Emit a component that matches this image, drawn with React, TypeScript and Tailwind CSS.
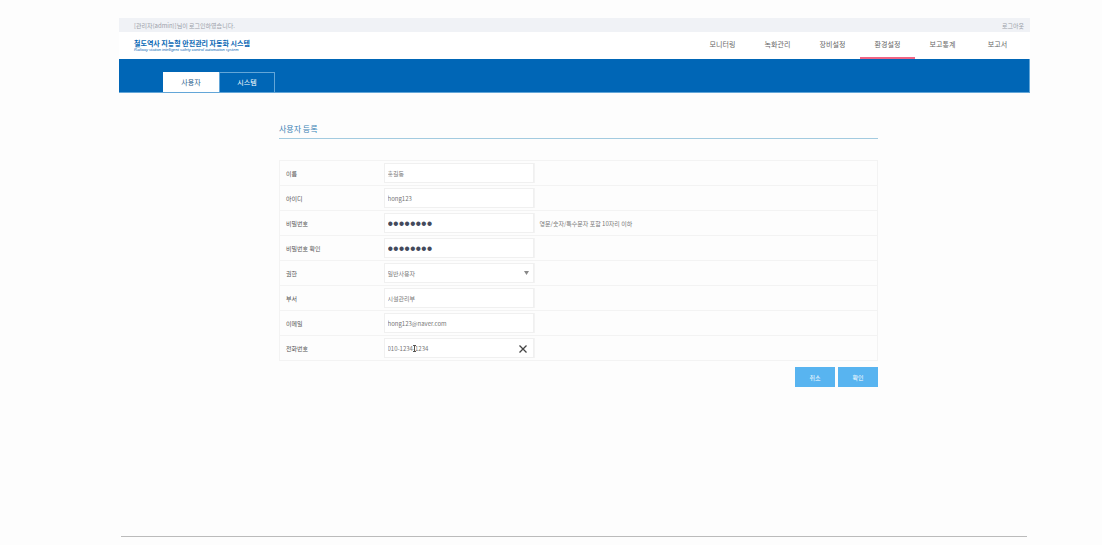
import { useState } from 'react'

interface Field {
  id: string
  label: string
  value: string
  type: 'text' | 'password' | 'select' | 'tel'
  hint?: string
}

const MENUS = ['모니터링', '녹화관리', '장비설정', '환경설정', '보고통계', '보고서']

const TABS = ['사용자', '시스템']

const FIELDS: Field[] = [
  { id: 'name',     label: '이름',          value: '홍길동',            type: 'text' },
  { id: 'userId',   label: '아이디',        value: 'hong123',           type: 'text' },
  { id: 'password', label: '비밀번호',      value: 'hong1234',          type: 'password', hint: '영문/숫자/특수문자 포함 10자리 이하' },
  { id: 'confirm',  label: '비밀번호 확인', value: 'hong1234',          type: 'password' },
  { id: 'role',     label: '권한',          value: '일반사용자',        type: 'select' },
  { id: 'dept',     label: '부서',          value: '시설관리부',        type: 'text' },
  { id: 'email',    label: '이메일',        value: 'hong123@naver.com', type: 'text' },
  { id: 'phone',    label: '전화번호',      value: '010-1234-1234',     type: 'tel' },
]

const inputClass =
  'block h-5 w-full rounded-none border border-[#f0f0f0] bg-white px-[3px] text-[6px] text-[#777] focus:outline-none'

export default function App() {
  const [menu, setMenu] = useState('환경설정')
  const [tab, setTab] = useState('사용자')
  const [form, setForm] = useState<Record<string, string>>(
    Object.fromEntries(FIELDS.map(f => [f.id, f.value]))
  )

  function update(id: string, value: string) {
    setForm(f => ({ ...f, [id]: value }))
  }

  return (
    <div className="min-h-screen bg-[#fdfdfd] pt-[18px] pr-[72px] pb-2 pl-[119px] font-['Noto_Sans_CJK_KR',sans-serif] flex flex-col">
      {/* Login bar */}
      <div className="flex h-[14px] items-center justify-between bg-[#f0f2f6] pr-[6px] pl-[15px] text-[6px] text-[#9a9ea8]">
        <p>[관리자(admin)]님이 로그인하였습니다.</p>
        <a href="#logout">로그아웃</a>
      </div>

      {/* Header */}
      <header className="flex h-[27px] justify-between bg-white pr-[5px] pl-[15px]">
        <a href="#home" className="flex flex-col justify-center text-[#0a68b4]">
          <span className="text-[7px] leading-[8px] font-bold">철도역사 지능형 안전관리 자동화 시스템</span>
          <span className="font-['Liberation_Sans',sans-serif] text-[4px] leading-[5px] italic">
            Railway station intelligent safety control automation system
          </span>
        </a>
        <nav className="flex">
          {MENUS.map(m => (
            <a
              key={m}
              href="#menu"
              onClick={() => setMenu(m)}
              className={`flex w-[55px] items-center justify-center border-b-2 text-[7px] text-[#666] ${
                menu === m ? 'border-[#ef6485]' : 'border-transparent'
              }`}
            >
              {m}
            </a>
          ))}
        </nav>
      </header>

      {/* Tabs */}
      <div className="flex h-[34px] items-end border-r border-b border-[#63a6d8] bg-[#0066b6] pl-[44px]">
        {TABS.map(t => (
          <button
            key={t}
            type="button"
            onClick={() => setTab(t)}
            className={`h-5 w-14 border border-b-0 text-[7px] ${
              tab === t ? 'border-white bg-white text-[#2d5f8c]' : 'border-[#63a6d8] text-white'
            }`}
          >
            {t}
          </button>
        ))}
      </div>

      {/* Form */}
      <main className="mt-[30px] mr-[152px] ml-[160px]">
        <h1 className="border-b border-[#a3cbe0] pb-[3px] text-[8px] leading-3 text-[#3d83b5]">사용자 등록</h1>

        <form onSubmit={e => e.preventDefault()}>
          <table className="mt-[21px] w-full table-fixed border-collapse text-[6px]">
            <colgroup>
              <col className="w-[104px]" />
              <col className="w-[150px]" />
              <col />
            </colgroup>
            <tbody>
              {FIELDS.map(f => (
                <tr key={f.id} className="h-[25px] border border-[#f3f3f3]">
                  <th scope="row" className="p-0 pl-[6px] text-left font-normal text-[#555]">
                    <label htmlFor={f.id}>{f.label}</label>
                  </th>
                  <td className="p-0">
                    {f.type === 'select' ? (
                      <div className="relative">
                        <select
                          id={f.id}
                          value={form[f.id]}
                          onChange={e => update(f.id, e.target.value)}
                          className={`${inputClass} appearance-none`}
                        >
                          <option>일반사용자</option>
                          <option>관리자</option>
                        </select>
                        <svg viewBox="0 0 5 4" className="pointer-events-none absolute top-2 right-[5px] h-1 w-[5px] fill-[#888]">
                          <path d="M0 0h5L2.5 4z" />
                        </svg>
                      </div>
                    ) : f.type === 'password' ? (
                      <input
                        id={f.id}
                        type="password"
                        value={form[f.id]}
                        onChange={e => update(f.id, e.target.value)}
                        className="block h-5 w-full border border-[#f0f0f0] bg-white px-[3px] pt-[2px] font-['Liberation_Sans',sans-serif] text-[16px] text-[#444a5c] focus:outline-none"
                      />
                    ) : (
                      <div className="relative">
                        <input
                          id={f.id}
                          type={f.type}
                          value={form[f.id]}
                          onChange={e => update(f.id, e.target.value)}
                          className={inputClass}
                        />
                        {f.type === 'tel' && (
                          <>
                            {/* text cursor */}
                            <svg viewBox="0 0 3 7" className="pointer-events-none absolute top-[7px] left-[29px] h-[7px] w-[3px] stroke-[#555]" fill="none">
                              <path d="M0 .5h3M1.5 .5v6M0 6.5h3" />
                            </svg>
                            <button
                              type="button"
                              aria-label="지우기"
                              onClick={() => update(f.id, '')}
                              className="absolute top-[7px] right-[7px]"
                            >
                              <svg viewBox="0 0 8 8" className="h-2 w-2 stroke-[#444]" strokeWidth="1.3">
                                <path d="M.5.5l7 7M7.5.5l-7 7" />
                              </svg>
                            </button>
                          </>
                        )}
                      </div>
                    )}
                  </td>
                  <td className="p-0 pl-[5px] text-[#777]">
                    {/* divider next to the inputs */}
                    <div className="-ml-[5px] flex h-5 items-center border-l border-[#f3f3f3] pl-[5px]">{f.hint}</div>
                  </td>
                </tr>
              ))}
            </tbody>
          </table>

          <div className="mt-[6px] flex justify-end gap-[3px] text-[6px] text-white">
            <button type="button" className="h-5 w-10 bg-[#58b4f0]">취소</button>
            <button type="submit" className="h-5 w-10 bg-[#58b4f0]">확인</button>
          </div>
        </form>
      </main>

      <footer className="mt-auto mr-[3px] ml-[2px] border-t border-[#bbb]" />
    </div>
  )
}
